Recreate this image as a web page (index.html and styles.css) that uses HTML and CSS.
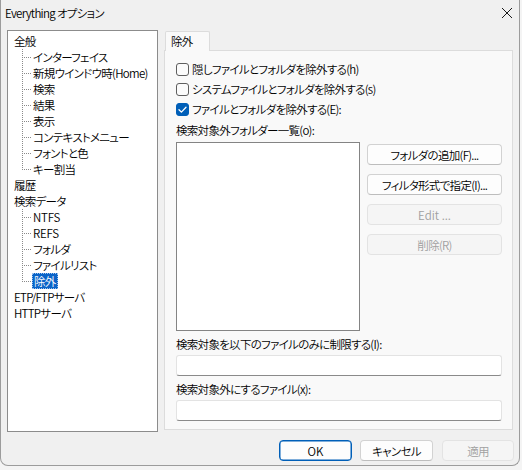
FILE: index.html
```html
<!DOCTYPE html>
<html lang="ja">
<head>
<meta charset="utf-8">
<title>Everything オプション</title>
<link rel="stylesheet" href="styles.css">
</head>
<body>
<div class="window">
  <div class="titlebar">
    <span class="title">Everything オプション</span>
    <span class="close">
      <svg width="12" height="12" viewBox="0 0 12 12"><path d="M1 1 L11 11 M11 1 L1 11" stroke="#1a1a1a" stroke-width="1" fill="none"/></svg>
    </span>
  </div>
  <div class="content">
    <div class="tree">
      <div class="node root">全般</div>
      <div class="node child"><span class="conn"></span><span class="lbl">インターフェイス</span></div>
      <div class="node child"><span class="conn"></span><span class="lbl">新規ウインドウ時(Home)</span></div>
      <div class="node child"><span class="conn"></span><span class="lbl">検索</span></div>
      <div class="node child"><span class="conn"></span><span class="lbl">結果</span></div>
      <div class="node child"><span class="conn"></span><span class="lbl">表示</span></div>
      <div class="node child"><span class="conn"></span><span class="lbl">コンテキストメニュー</span></div>
      <div class="node child"><span class="conn"></span><span class="lbl">フォントと色</span></div>
      <div class="node child"><span class="conn last"></span><span class="lbl">キー割当</span></div>
      <div class="node root">履歴</div>
      <div class="node root">検索データ</div>
      <div class="node child"><span class="conn"></span><span class="lbl latin">NTFS</span></div>
      <div class="node child"><span class="conn"></span><span class="lbl latin">REFS</span></div>
      <div class="node child"><span class="conn"></span><span class="lbl">フォルダ</span></div>
      <div class="node child"><span class="conn"></span><span class="lbl">ファイルリスト</span></div>
      <div class="node child"><span class="conn last"></span><span class="lbl selected">除外</span></div>
      <div class="node root">ETP/FTPサーバ</div>
      <div class="node root">HTTPサーバ</div>
    </div>
    <div class="right">
      <div class="tabrow">
        <span class="tabgap"></span>
        <span class="tab">除外</span>
        <span class="tabfill"></span>
      </div>
      <div class="panel">
        <label class="check"><span class="box"></span><span>隠しファイルとフォルダを除外する(h)</span></label>
        <label class="check"><span class="box"></span><span>システムファイルとフォルダを除外する(s)</span></label>
        <label class="check"><span class="box checked"><svg width="13" height="13" viewBox="0 0 13 13"><path d="M3 6.8 L5.4 9.1 L10 4.3" stroke="#fff" stroke-width="1.3" fill="none" stroke-linecap="round" stroke-linejoin="round"/></svg></span><span>ファイルとフォルダを除外する(E):</span></label>
        <div class="label first">検索対象外フォルダー一覧(o):</div>
        <div class="listrow">
          <div class="listbox"></div>
          <div class="btncol">
            <button class="btn">フォルダの追加(F)...</button>
            <button class="btn">フィルタ形式で指定(I)...</button>
            <button class="btn disabled latin">Edit ...</button>
            <button class="btn disabled">削除(R)</button>
          </div>
        </div>
        <div class="label">検索対象を以下のファイルのみに制限する(I):</div>
        <div class="input"></div>
        <div class="label">検索対象外にするファイル(x):</div>
        <div class="input"></div>
      </div>
    </div>
  </div>
  <div class="footer">
    <button class="btn fbtn ok latin">OK</button>
    <button class="btn fbtn">キャンセル</button>
    <button class="btn fbtn disabled apply">適用</button>
  </div>
</div>
</body>
</html>
```

FILE: styles.css
```css
html, body {
  margin: 0;
  padding: 0;
}
body {
  width: 522px;
  height: 470px;
  background: #f4f4f4;
  font-family: "Noto Sans CJK JP", "Noto Sans", sans-serif;
  font-size: 11.5px;
  font-weight: 350;
  letter-spacing: -0.7px;
  font-feature-settings: "palt";
  color: #000;
  overflow: hidden;
}
.window {
  width: 518px;
  height: 465px;
  background: #f0f0f0;
  border-right: 1px solid #9c9c9c;
  border-bottom: 1px solid #9c9c9c;
  border-left: 1px solid #9c9c9c;
  border-radius: 0 0 8px 8px;
  display: flex;
  flex-direction: column;
  box-sizing: content-box;
}
.titlebar {
  height: 30px;
  display: flex;
  align-items: center;
  justify-content: space-between;
  padding-left: 4px;
  padding-right: 6px;
  box-sizing: border-box;
  background: #f0f0f0;
  margin-top: -2px;
}
.close {
  display: flex;
  width: 12px;
  height: 12px;
}
.content {
  display: flex;
  align-items: flex-start;
  padding-left: 6px;
  gap: 6px;
}
.tree {
  width: 151px;
  height: 402px;
  box-sizing: border-box;
  border: 1px solid #8c8c8c;
  background: #fff;
  margin-top: 2px;
  padding-top: 2px;
}
.node {
  height: 16px;
  line-height: 16px;
  display: flex;
  align-items: stretch;
  white-space: nowrap;
}
.root {
  padding-left: 6px;
}
.child {
  padding-left: 14px;
}
.conn {
  width: 10px;
  flex: none;
  background-image:
    repeating-linear-gradient(to bottom, #8a8a8a 0 1px, transparent 1px 2px),
    repeating-linear-gradient(to right, #8a8a8a 0 1px, transparent 1px 2px);
  background-size: 1px 100%, 9px 1px;
  background-position: 0 0, 0 8px;
  background-repeat: no-repeat;
}
.conn.last {
  background-size: 1px 8px, 9px 1px;
}
.lbl {
  padding-left: 1px;
  padding-right: 1px;
}
.latin {
  letter-spacing: -0.2px;
}
.lbl.selected {
  background: #0a64c8;
  color: #fff;
  outline: 1px dotted #9cc3ee;
  outline-offset: -1px;
  padding: 0 2px;
}
.right {
  width: 349px;
  display: flex;
  flex-direction: column;
  margin-top: 3px;
}
.tabrow {
  display: flex;
  height: 20px;
}
.tabgap {
  width: 1px;
  border-bottom: 1px solid #dcdcdc;
}
.tab {
  width: 45px;
  box-sizing: border-box;
  border: 1px solid #dcdcdc;
  border-bottom: none;
  background: #f9f9f9;
  padding-left: 5px;
  line-height: 19px;
  border-radius: 2px 2px 0 0;
}
.tabfill {
  flex: 1;
  border-bottom: 1px solid #dcdcdc;
}
.panel {
  height: 379px;
  box-sizing: border-box;
  background: #f9f9f9;
  border: 1px solid #dcdcdc;
  border-top: none;
  padding: 8px 0 0 11px;
  display: flex;
  flex-direction: column;
}
.check {
  height: 20px;
  display: flex;
  align-items: center;
  gap: 3px;
}
.box {
  width: 13px;
  height: 13px;
  box-sizing: border-box;
  border: 1px solid #5e5e5e;
  border-radius: 3px;
  background: #fbfbfb;
  display: flex;
  flex: none;
}
.box.checked {
  background: #005fb8;
  border-color: #005fb8;
}
.box.checked svg {
  margin: -1px;
}
.label {
  height: 20px;
  line-height: 20px;
  margin-top: 3px;
}
.label.first {
  margin-top: 1px;
}
.listrow {
  display: flex;
  gap: 7px;
  margin-top: 2px;
  height: 189px;
}
.listbox {
  width: 184px;
  height: 189px;
  box-sizing: border-box;
  background: #fff;
  border: 1px solid #848484;
}
.btncol {
  display: flex;
  flex-direction: column;
  gap: 9px;
  padding-top: 2px;
}
.btn {
  font-family: inherit;
  font-size: 11.5px;
  font-weight: 350;
  letter-spacing: -0.7px;
  font-feature-settings: "palt";
  color: #000;
  width: 135px;
  height: 21px;
  box-sizing: border-box;
  background: #fdfdfd;
  border: 1px solid #d2d2d2;
  border-bottom-color: #bdbdbd;
  border-radius: 4px;
  padding: 0;
  line-height: 18px;
}
.btn.latin {
  letter-spacing: 0;
}
.btn.disabled {
  color: #a0a0a0;
  background: #f5f5f5;
  border-color: #e3e3e3;
}
.input {
  width: 326px;
  height: 21px;
  box-sizing: border-box;
  background: #fff;
  border: 1px solid #e3e3e3;
  border-bottom: 1px solid #8a8a8a;
  border-radius: 3px;
}
.label + .input {
  margin-top: 1px;
}
.footer {
  display: flex;
  justify-content: flex-end;
  gap: 8px;
  padding-right: 5px;
  margin-top: 8px;
}
.fbtn {
  width: 73px;
}
.ok {
  border: 1px solid #005fb8;
  box-shadow: inset 0 0 0 0.5px #005fb8;
}
.apply {
  margin-left: 1px;
  width: 72px;
}
```
